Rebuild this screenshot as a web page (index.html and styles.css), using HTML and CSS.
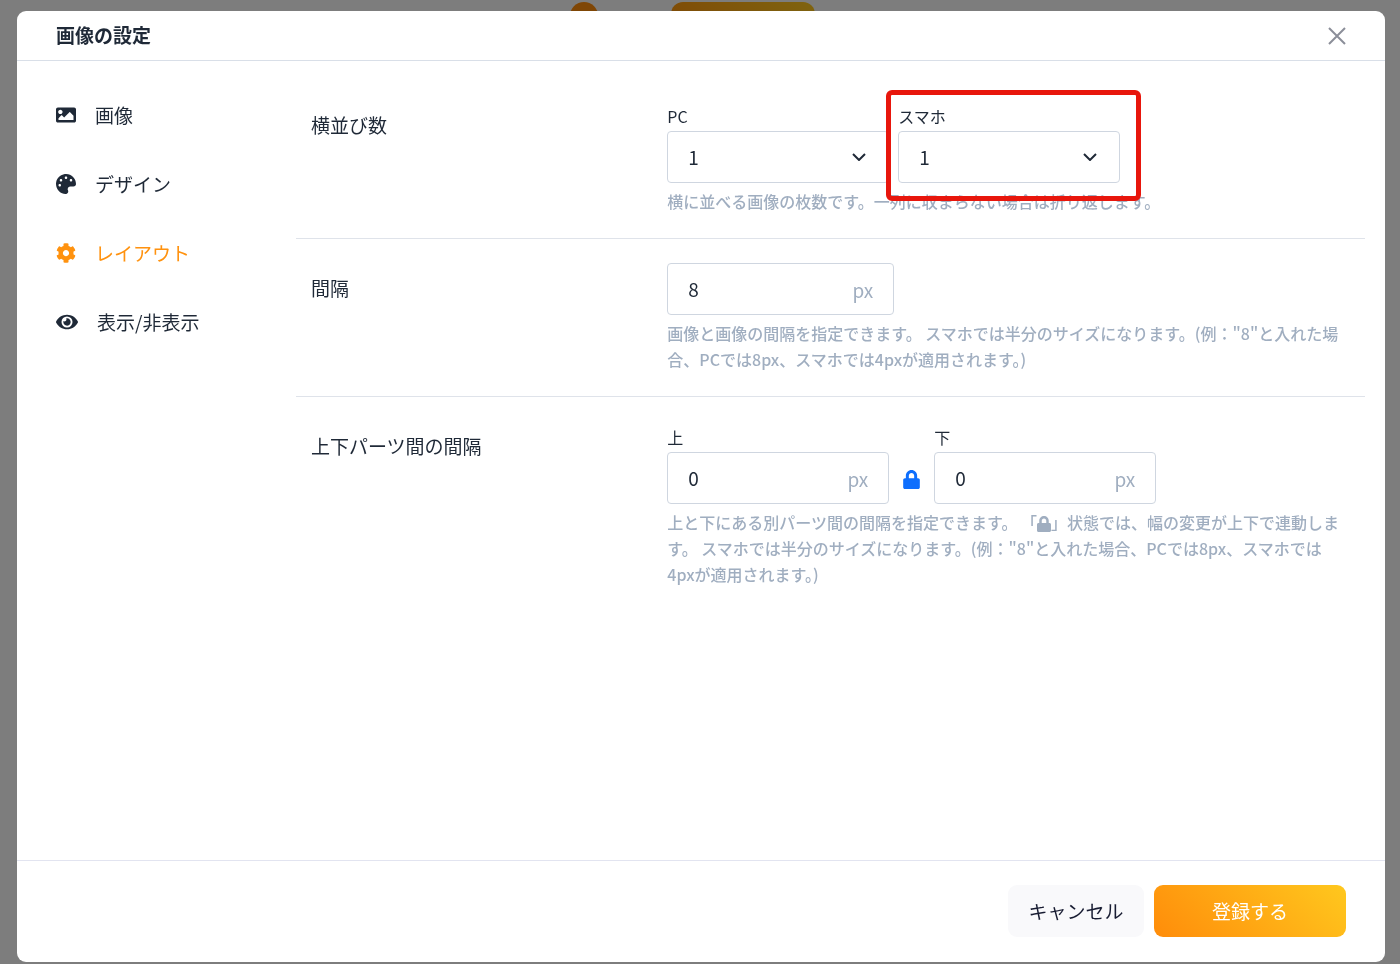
FILE: index.html
```html
<!DOCTYPE html>
<html lang="ja">
<head>
  <meta charset="UTF-8">
  <meta name="viewport" content="width=device-width, initial-scale=1">
  <title>画像の設定</title>
  <link rel="stylesheet" href="styles.css">
</head>
<body>

  <!-- page behind the modal -->
  <div class="page-bar">
    <span class="page-dot"></span>
    <span class="page-button"></span>
  </div>

  <div class="overlay">
    <div class="modal" role="dialog" aria-labelledby="modal-title">
      <header class="modal-header">
        <h1 id="modal-title">画像の設定</h1>
        <button type="button" class="close" aria-label="閉じる">
          <svg viewBox="0 0 18 18"><path d="M1 1l16 16M17 1L1 17"/></svg>
        </button>
      </header>

      <div class="modal-body">
        <nav class="menu">
          <a href="#">
            <svg class="icon" viewBox="0 0 512 512"><path d="M464 448H48c-26.51 0-48-21.49-48-48V112c0-26.51 21.49-48 48-48h416c26.51 0 48 21.49 48 48v288c0 26.51-21.49 48-48 48zM112 120c-30.928 0-56 25.072-56 56s25.072 56 56 56 56-25.072 56-56-25.072-56-56-56zM64 384h384V272l-87.515-87.515c-4.686-4.686-12.284-4.686-16.971 0L208 320l-55.515-55.515c-4.686-4.686-12.284-4.686-16.971 0L64 336v48z"/></svg>
            画像
          </a>
          <a href="#">
            <svg class="icon" viewBox="0 0 512 512"><path d="M204.3 5C104.9 24.4 24.8 104.3 5.2 203.4c-37 187 131.7 326.4 258.8 306.7 41.2-6.4 61.4-54.6 42.5-91.7-23.1-45.4 9.9-98.4 60.9-98.4h79.7c35.8 0 64.8-29.6 64.9-65.3C511.5 97.1 368.1-26.9 204.3 5zM96 320c-17.7 0-32-14.3-32-32s14.3-32 32-32 32 14.3 32 32-14.3 32-32 32zm32-128c-17.7 0-32-14.3-32-32s14.3-32 32-32 32 14.3 32 32-14.3 32-32 32zm128-64c-17.7 0-32-14.3-32-32s14.3-32 32-32 32 14.3 32 32-14.3 32-32 32zm128 64c-17.7 0-32-14.3-32-32s14.3-32 32-32 32 14.3 32 32-14.3 32-32 32z"/></svg>
            デザイン
          </a>
          <a href="#" class="active">
            <svg class="icon" viewBox="0 0 512 512"><path d="M487.4 315.7l-42.6-24.6c4.3-23.2 4.3-47 0-70.2l42.6-24.6c4.9-2.8 7.1-8.6 5.5-14-11.1-35.6-30-67.8-54.7-94.6-3.8-4.1-10-5.1-14.8-2.3L380.8 110c-17.9-15.4-38.5-27.3-60.8-35.1V25.8c0-5.6-3.9-10.5-9.4-11.7-36.7-8.2-74.3-7.8-109.2 0-5.5 1.2-9.4 6.1-9.4 11.7V75c-22.2 7.9-42.8 19.8-60.8 35.1L88.7 85.5c-4.9-2.8-11-1.9-14.8 2.3-24.7 26.7-43.6 58.9-54.7 94.6-1.7 5.4.6 11.2 5.5 14L67.3 221c-4.3 23.2-4.3 47 0 70.2l-42.6 24.6c-4.9 2.8-7.1 8.6-5.5 14 11.1 35.6 30 67.8 54.7 94.6 3.8 4.1 10 5.1 14.8 2.3l42.6-24.6c17.9 15.4 38.5 27.3 60.8 35.1v49.2c0 5.6 3.9 10.5 9.4 11.7 36.7 8.2 74.3 7.8 109.2 0 5.5-1.2 9.4-6.1 9.4-11.7v-49.2c22.2-7.9 42.8-19.8 60.8-35.1l42.6 24.6c4.9 2.8 11 1.9 14.8-2.3 24.7-26.7 43.6-58.9 54.7-94.6 1.5-5.5-.7-11.3-5.6-14.1zM256 336c-44.1 0-80-35.9-80-80s35.9-80 80-80 80 35.9 80 80-35.9 80-80 80z"/></svg>
            レイアウト
          </a>
          <a href="#">
            <svg class="icon icon-wide" viewBox="0 0 576 512"><path d="M572.52 241.4C518.29 135.59 410.93 64 288 64S57.68 135.64 3.48 241.41a32.35 32.35 0 0 0 0 29.19C57.71 376.41 165.07 448 288 448s230.32-71.64 284.52-177.41a32.35 32.35 0 0 0 0-29.19zM288 400a144 144 0 1 1 144-144 143.93 143.93 0 0 1-144 144zm0-240a95.31 95.31 0 0 0-25.31 3.79 47.85 47.85 0 0 1-66.9 66.9A95.78 95.78 0 1 0 288 160z"/></svg>
            表示/非表示
          </a>
        </nav>

        <form class="settings" id="layout-form">
          <section class="row">
            <h2>横並び数</h2>
            <div class="fields">
              <div class="field-group">
                <div class="field">
                  <label for="cols-pc">PC</label>
                  <div class="select">
                    <select id="cols-pc">
                      <option>1</option>
                      <option>2</option>
                      <option>3</option>
                    </select>
                    <svg viewBox="0 0 14 8"><path d="M1 1l6 6 6-6"/></svg>
                  </div>
                </div>
                <div class="field highlight">
                  <label for="cols-sp">スマホ</label>
                  <div class="select">
                    <select id="cols-sp">
                      <option>1</option>
                      <option>2</option>
                      <option>3</option>
                    </select>
                    <svg viewBox="0 0 14 8"><path d="M1 1l6 6 6-6"/></svg>
                  </div>
                </div>
              </div>
              <p class="help">横に並べる画像の枚数です。一列に収まらない場合は折り返します。</p>
            </div>
          </section>

          <section class="row">
            <h2>間隔</h2>
            <div class="fields">
              <div class="input input-single">
                <input type="text" id="gap" value="8" aria-label="間隔">
                <span>px</span>
              </div>
              <p class="help">画像と画像の間隔を指定できます。 スマホでは半分のサイズになります。(例："8"と入れた場合、PCでは8px、スマホでは4pxが適用されます。)</p>
            </div>
          </section>

          <section class="row">
            <h2>上下パーツ間の間隔</h2>
            <div class="fields">
              <div class="field-group">
                <div class="field">
                  <label for="space-top">上</label>
                  <div class="input">
                    <input type="text" id="space-top" value="0">
                    <span>px</span>
                  </div>
                </div>
                <button type="button" class="lock" aria-label="上下を連動">
                  <svg viewBox="0 0 448 512"><path d="M400 224h-24v-72C376 68.2 307.8 0 224 0S72 68.2 72 152v72H48c-26.5 0-48 21.5-48 48v192c0 26.5 21.5 48 48 48h352c26.5 0 48-21.5 48-48V272c0-26.5-21.5-48-48-48zm-104 0H152v-72c0-39.7 32.3-72 72-72s72 32.3 72 72v72z"/></svg>
                </button>
                <div class="field">
                  <label for="space-bottom">下</label>
                  <div class="input">
                    <input type="text" id="space-bottom" value="0">
                    <span>px</span>
                  </div>
                </div>
              </div>
              <p class="help">上と下にある別パーツ間の間隔を指定できます。 「<svg class="help-lock" viewBox="0 0 448 512"><path d="M400 224h-24v-72C376 68.2 307.8 0 224 0S72 68.2 72 152v72H48c-26.5 0-48 21.5-48 48v192c0 26.5 21.5 48 48 48h352c26.5 0 48-21.5 48-48V272c0-26.5-21.5-48-48-48zm-104 0H152v-72c0-39.7 32.3-72 72-72s72 32.3 72 72v72z"/></svg>」状態では、幅の変更が上下で連動します。 スマホでは半分のサイズになります。(例："8"と入れた場合、PCでは8px、スマホでは4pxが適用されます。)</p>
            </div>
          </section>
        </form>
      </div>

      <footer class="modal-footer">
        <button type="button" class="btn btn-cancel">キャンセル</button>
        <button type="submit" form="layout-form" class="btn btn-submit">登録する</button>
      </footer>
    </div>
  </div>

</body>
</html>
```
FILE: styles.css
```css
* {
  margin: 0;
  padding: 0;
  box-sizing: border-box;
}

body {
  font-family: "Noto Sans CJK JP", sans-serif;
  font-size: 19px;
  color: #1f2937;
  background: #fafafa;
  min-height: 100vh;
}

button, input, select {
  font: inherit;
  color: inherit;
}

svg {
  display: block;
  fill: currentColor;
}

.page-bar {
  display: flex;
  justify-content: center;
  gap: 73px;
  padding: 2px 15px 0 0;
}

.page-dot {
  width: 28px;
  height: 28px;
  border-radius: 50%;
  background: #ff8c0a;
}

.page-button {
  width: 144px;
  height: 50px;
  border-radius: 12px;
  background: linear-gradient(45deg, #ff8c0a, #ffc81e);
}

.overlay {
  position: fixed;
  inset: 0;
  padding: 11px 15px 2px 17px;
  background: rgba(0, 0, 0, 0.5);
}

.modal {
  display: flex;
  flex-direction: column;
  height: 100%;
  background: #fff;
  border-radius: 9px;
  overflow: auto;
}

.modal-header {
  display: flex;
  align-items: center;
  justify-content: space-between;
  height: 50px;
  flex-shrink: 0;
  padding: 0 39px;
  border-bottom: 1px solid #d9dfe8;
}

.modal-header h1 {
  padding-bottom: 2px;
  font-size: 19px;
  font-weight: 700;
}

.close {
  border: none;
  background: none;
  color: #8b8e99;
  cursor: pointer;
}

.close svg {
  width: 18px;
  height: 18px;
  fill: none;
  stroke: currentColor;
  stroke-width: 2;
}

.modal-body {
  display: flex;
  flex: 1;
}

.menu {
  display: flex;
  flex-direction: column;
  gap: 41px;
  width: 279px;
  padding: 40px 0 0 39px;
}

.menu a {
  display: flex;
  align-items: center;
  gap: 19px;
  line-height: 28px;
  color: #1f2937;
  text-decoration: none;
}

.menu a.active {
  color: #ff920f;
}

.icon {
  width: 20px;
  height: 20px;
}

.icon-wide {
  width: 22px;
}

.settings {
  flex: 1;
  padding: 15px 20px 0 0;
}

.row {
  display: flex;
  padding: 24px 0;
  border-bottom: 1px solid #dfe3ea;
}

.row:last-child {
  border-bottom: none;
}

.row h2 {
  width: 33.333%;
  padding: 10px 15px 0;
  font-size: 19px;
  font-weight: 400;
  line-height: 30px;
}

.fields {
  flex: 1;
  padding: 0 15px;
}

.field-group {
  display: flex;
  gap: 9px;
}

.field {
  width: 222px;
}

.field label {
  display: block;
  padding-top: 4px;
  margin-bottom: 3px;
  font-size: 16px;
  line-height: 24px;
}

.select {
  position: relative;
}

.select select {
  width: 100%;
  height: 52px;
  padding: 0 20px 2px;
  border: 1px solid #cfd6e0;
  border-radius: 4px;
  background: #fff;
  appearance: none;
}

.select svg {
  position: absolute;
  top: 22px;
  right: 23px;
  width: 14px;
  height: 8px;
  fill: none;
  stroke: currentColor;
  stroke-width: 2;
  pointer-events: none;
}

.input {
  display: flex;
  align-items: center;
  height: 52px;
  padding: 0 20px;
  border: 1px solid #cfd6e0;
  border-radius: 4px;
}

.input-single {
  width: 227px;
}

.input input {
  flex: 1;
  min-width: 0;
  padding-bottom: 2px;
  border: none;
  outline: none;
  background: none;
}

.input span {
  color: #a0aec0;
}

/* red frame round the smartphone field */
.highlight {
  position: relative;
}

.highlight::after {
  content: '';
  position: absolute;
  top: -10px;
  right: -21px;
  bottom: -18px;
  left: -12px;
  border: 5px solid #e8160c;
  border-radius: 6px;
  pointer-events: none;
}

.lock {
  align-self: flex-end;
  height: 52px;
  padding: 3px 5px 0;
  border: none;
  background: none;
  color: #0d6efd;
  cursor: pointer;
}

.lock svg {
  width: 17px;
  height: 19px;
}

.help {
  margin-top: 5px;
  padding-right: 6px;
  font-size: 16px;
  font-weight: 500;
  line-height: 26px;
  color: #a0aec0;
}

.help-lock {
  display: inline-block;
  width: 14px;
  height: 16px;
  vertical-align: -3px;
}

.modal-footer {
  display: flex;
  justify-content: flex-end;
  gap: 10px;
  padding: 24px 39px 25px;
  border-top: 1px solid #e2e4f0;
}

.btn {
  height: 52px;
  padding-bottom: 2px;
  border: none;
  border-radius: 9px;
  cursor: pointer;
}

.btn-cancel {
  width: 136px;
  background: #f9f9fb;
  color: #181c32;
}

.btn-submit {
  width: 192px;
  background: linear-gradient(45deg, #ff8c0a, #ffc81e);
  color: #fff;
}
```
